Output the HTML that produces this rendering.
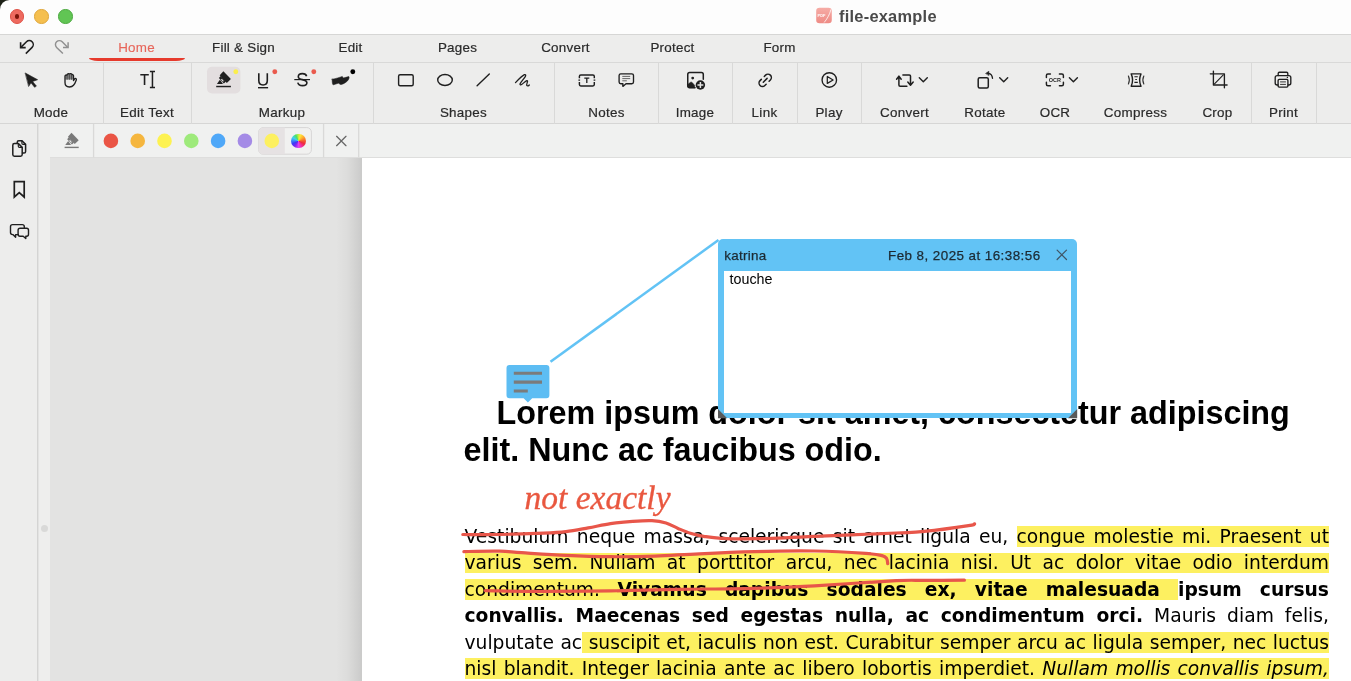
<!DOCTYPE html>
<html lang="en">
<head>
<meta charset="utf-8">
<title>file-example</title>
<style>
*{box-sizing:border-box;margin:0;padding:0}
html,body{width:1351px;height:681px;overflow:hidden;background:#fff}
body{position:relative;font-family:"Liberation Sans",sans-serif;color:#2a2a2a;font-size:13px}
.abs{position:absolute}
#titlebar{left:0;top:0;width:1351px;height:34px;background:#fdfdfd}
#corner{left:0;top:0;width:10px;height:10px;background:#1d2117}
#corner i{position:absolute;left:0.3px;top:0;width:24px;height:24px;border-radius:9.5px;background:#fdfdfd}
.tl{width:14.5px;height:14.5px;border-radius:50%;top:9.3px}
#title{left:839px;top:6.5px;font-weight:bold;font-size:16.4px;color:#4a4a4a;letter-spacing:0.25px;white-space:nowrap}
#tabrow{left:0;top:34px;width:1351px;height:29px;background:#ededec;border-top:1px solid #d6d6d5;border-bottom:1px solid #d9d9d8}
.tab{top:33.9px;-webkit-text-stroke:0.2px currentColor;height:28px;line-height:28px;text-align:center;width:107px;font-size:13.4px;letter-spacing:0.25px;color:#2a2a2a}
#toolbar{left:0;top:63px;width:1351px;height:61px;background:#ededec;border-bottom:1px solid #d6d6d5}
.sep{top:63px;width:1.4px;height:60.5px;background:#d9d9d8}
.lbl{top:104.7px;-webkit-text-stroke:0.2px currentColor;height:16px;line-height:16px;font-size:13.4px;letter-spacing:0.3px;text-align:center;white-space:nowrap;color:#2a2a2a;transform:translateX(-50%)}
.ico{overflow:visible}
#main{left:0;top:124px;width:1351px;height:557px;background:#e3e3e2}
#side{left:0;top:124px;width:38px;height:557px;background:#ededec;border-right:1px solid #d4d4d3}
#strip{left:39px;top:124px;width:11px;height:557px;background:#eeeeed}
#annbar{left:50px;top:124px;width:1301px;height:34px;background:#f0f1f0;border-bottom:1px solid #dededd}
#page{left:362px;top:158px;width:989px;height:523px;background:#fff}
#pshadow{left:336px;top:158px;width:26px;height:523px;background:linear-gradient(to right,rgba(0,0,0,0),rgba(0,0,0,0.03) 45%,rgba(0,0,0,0.11))}
.h1{left:464px;font-family:"Liberation Sans",sans-serif;font-weight:bold;font-size:32.3px;line-height:36px;color:#000;white-space:nowrap;height:36px}
.bl{left:464.5px;width:864.5px;height:26px;line-height:26px;font-family:"DejaVu Sans","Liberation Sans",sans-serif;font-size:18.7px;color:#000;text-align:justify;text-align-last:justify;white-space:nowrap;overflow:visible}
.bl span.hl{background:linear-gradient(#fdf060,#fdf060) no-repeat;background-size:100% 21px;background-position:0 0.5px}
.bl b{font-weight:bold}
.bl i{font-style:italic}
</style>
</head>
<body><div style="position:absolute;left:0;top:0;width:1351px;height:681px;will-change:transform">
<!-- title bar -->
<div id="titlebar" class="abs"></div>
<div id="corner" class="abs"><i></i></div>
<div class="abs tl" style="left:9.9px;background:#ee6a5f;border:0.6px solid #df5348"></div>
<div class="abs" style="left:14.8px;top:14.2px;width:4.7px;height:4.7px;border-radius:50%;background:#7c1409"></div>
<div class="abs tl" style="left:34.1px;background:#f5bf4f;border:0.6px solid #dfa63a"></div>
<div class="abs tl" style="left:58.3px;background:#61c554;border:0.6px solid #4ba93f"></div>
<svg class="abs" style="left:816px;top:7px" width="17" height="17" viewBox="816 7 17 17"><defs><linearGradient id="pg" x1="0" y1="0" x2="0" y2="1"><stop offset="0" stop-color="#f6aca6"/><stop offset="1" stop-color="#ee8b85"/></linearGradient></defs><rect x="816.2" y="7.8" width="15.6" height="15.4" rx="3.3" fill="url(#pg)"/><text x="817.6" y="16.9" font-size="4.3" font-weight="bold" fill="#fff" font-family="Liberation Sans, sans-serif" textLength="7.8" lengthAdjust="spacingAndGlyphs">PDF</text><path d="M824.4 22.2C826.6 19.6 829.8 14.6 830.9 9.8" stroke="#fff" stroke-opacity="0.85" stroke-width="0.9" fill="none" stroke-linecap="round"/></svg>
<div id="title" class="abs">file-example</div>

<!-- tab row -->
<div id="tabrow" class="abs"></div>
<div class="abs tab" style="left:83px;color:#e7655a;-webkit-text-stroke:0.1px #e7655a">Home</div>
<div class="abs" style="left:88.5px;top:57.5px;width:96px;height:3px;background:#e63a2c;border-radius:0 0 9px 9px / 0 0 3px 3px"></div>
<div class="abs tab" style="left:190px">Fill &amp; Sign</div>
<div class="abs tab" style="left:297px">Edit</div>
<div class="abs tab" style="left:404px">Pages</div>
<div class="abs tab" style="left:512px">Convert</div>
<div class="abs tab" style="left:619px">Protect</div>
<div class="abs tab" style="left:726px">Form</div>

<!-- toolbar -->
<div id="toolbar" class="abs"></div>
<div class="abs sep" style="left:103px"></div>
<div class="abs sep" style="left:191px"></div>
<div class="abs sep" style="left:373px"></div>
<div class="abs sep" style="left:554px"></div>
<div class="abs sep" style="left:658px"></div>
<div class="abs sep" style="left:732px"></div>
<div class="abs sep" style="left:797px"></div>
<div class="abs sep" style="left:861px"></div>
<div class="abs sep" style="left:1251px"></div>
<div class="abs sep" style="left:1316px"></div>
<div class="abs lbl" style="left:51px">Mode</div>
<div class="abs lbl" style="left:147px">Edit Text</div>
<div class="abs lbl" style="left:282px">Markup</div>
<div class="abs lbl" style="left:463.5px">Shapes</div>
<div class="abs lbl" style="left:606.5px">Notes</div>
<div class="abs lbl" style="left:695px">Image</div>
<div class="abs lbl" style="left:764.5px">Link</div>
<div class="abs lbl" style="left:829px">Play</div>
<div class="abs lbl" style="left:904.5px">Convert</div>
<div class="abs lbl" style="left:985px">Rotate</div>
<div class="abs lbl" style="left:1055px">OCR</div>
<div class="abs lbl" style="left:1135.5px">Compress</div>
<div class="abs lbl" style="left:1217.5px">Crop</div>
<div class="abs lbl" style="left:1283.5px">Print</div>
<!--ICONS-START-->
<!-- undo / redo -->
<svg class="abs ico" style="left:0;top:0" width="1351" height="130" viewBox="0 0 1351 130" fill="none" stroke="#1f1f1f" stroke-width="1.5" stroke-linecap="round" stroke-linejoin="round">
<!-- undo -->
<path d="M20.9 47.4L26.5 41.8A3.9 3.9 0 0 1 32.1 47.4L25.8 53.6" stroke-width="1.55" stroke-linecap="butt"/>
<path d="M20.6 42.3V47.6H25.7" stroke-width="1.6" stroke-linecap="butt" stroke-linejoin="miter"/>
<!-- redo -->
<g stroke="#909090"><path d="M67.8 47.4L62.2 41.8A3.9 3.9 0 0 0 56.6 47.4L62.9 53.6" stroke-width="1.45" stroke-linecap="butt"/>
<path d="M68.1 42.3V47.6H63" stroke-width="1.5" stroke-linecap="butt" stroke-linejoin="miter"/></g>
<!-- pointer -->
<path d="M25.4 73.1L37.6 79.7L32.6 81.5L36.4 86.1L34.6 87.3L31 82.8L28.8 86.2Z" fill="#1f1f1f" stroke-width="0.6"/>
<!-- hand -->
<path d="M65.4 79.4V76C65.4 75 66.6 74.6 67.2 75.2C67.4 74 68.8 73.4 69.4 74.2C70 73.3 71.2 73.5 71.5 74.5C72.2 74.2 73.2 74.6 73.2 75.6V79.4Z" fill="#8c8c8c" stroke="none"/>
<g stroke-width="1.35"><path d="M65 79V76.2C65 75.2 66 74.8 66.9 75.3C67.1 74 68.6 73.4 69.4 74.1C70.2 73.2 71.6 73.6 71.8 74.6C72.6 74.3 73.5 74.8 73.5 75.8V80.6L74.6 78.9C75.3 77.9 76.8 78.6 76.3 79.9C75.4 82.4 74.8 83.8 73.5 85.3C72.5 86.5 71.1 87 69.4 87C66.6 87 65 85.2 65 82.6Z"/>
<path d="M67.1 75.6V79.3M69.3 74.6V79.3M71.4 75V79.3" stroke-width="1.1" stroke="#4a4a4a"/></g>
<!-- edit text -->
<path d="M140.3 74.8H148.8M144.55 74.8V84.9" stroke-width="1.6" stroke-linecap="butt"/>
<path d="M149.9 71.6H155M149.9 87.4H155M152.45 71.6V87.4" stroke-width="1.5" stroke-linecap="butt"/>
<!-- highlight btn -->
<rect x="207" y="66.8" width="33.4" height="26.6" rx="5" fill="#e3dedf" stroke="none"/>
<g fill="#1f1f1f" stroke="none"><path d="M223.4 71.2L230.9 79L226.8 82.9L219.7 75.3Z"/><path d="M220.6 76L218.9 78L223.8 83.4L226 81.6Z"/><path d="M219.9 79.8L223 84.1H216.9Z"/><path d="M216.2 85.8H230.9V87.25H216.2Z"/></g>
<path d="M221.4 79.1L223.4 81.4" stroke="#e9e5e6" stroke-width="1.15" stroke-linecap="butt"/>
<circle cx="235.8" cy="71.7" r="2.45" fill="#fbee4c" stroke="none"/>
<!-- underline -->
<path d="M258.8 73.2V80.6C258.8 83.4 260.6 85 263.05 85C265.5 85 267.3 83.4 267.3 80.6V73.2" stroke-width="1.6" stroke-linecap="butt"/>
<path d="M258 87.7H268.1" stroke-width="1.4" stroke-linecap="butt"/>
<circle cx="274.8" cy="71.7" r="2.45" fill="#ea5a4d" stroke="none"/>
<!-- strike -->
<path d="M306.6 76.3C306.2 74.6 304.6 73.6 302.4 73.6C300 73.6 298.3 74.8 298.3 76.7C298.3 78.5 299.8 79.1 302.4 79.6C305.2 80.2 306.9 80.9 306.9 82.8C306.9 84.6 305.1 85.6 302.6 85.6C300 85.6 298.2 84.5 297.8 82.6" stroke-width="1.6" stroke-linecap="butt"/>
<path d="M294.3 79.6H310" stroke-width="1.2" stroke-linecap="butt"/>
<circle cx="313.8" cy="71.7" r="2.45" fill="#ea5a4d" stroke="none"/>
<!-- freehand -->
<path d="M332.1 79.2C336 78.6 339.5 77.4 342.3 76.4L343.3 78L348.6 76.6C349.4 76.4 349.2 78 348.7 79.2C347.5 81.6 344.3 83.6 341.6 84.4C340 84.8 339.4 83.6 338.6 83.2C337.2 83.6 334.6 84.4 333.2 84.8C332.4 84.9 332.2 82 332.1 79.2Z" fill="#1f1f1f" stroke-width="0.5"/>
<circle cx="352.8" cy="71.7" r="2.45" fill="#000" stroke="none"/>
<!-- shapes -->
<rect x="398.6" y="74.8" width="14.6" height="11" rx="1.5" stroke-width="1.4"/>
<ellipse cx="445" cy="80" rx="7.3" ry="5.5" stroke-width="1.4"/>
<path d="M477.1 85.7L489.3 74.1" stroke-width="1.4"/>
<path d="M515.5 82.6C518.6 79.4 522.1 75.8 524.4 74.7C525.6 74.2 526 75.2 525.4 76.4C524.2 78.6 520.4 82.6 520 84C519.8 85 520.8 85.2 521.6 84.6C523.4 83.3 525.4 81 526.8 80.6C527.8 80.4 527.6 81.6 527.2 82.6C526.8 83.8 526.4 85 526.9 85.6C527.5 86.2 528.6 85.8 529.3 85" stroke-width="1.3"/>
<!-- text box -->
<path d="M579.4 78.2V76.3C579.4 75.5 580 74.9 580.8 74.9H592.9C593.7 74.9 594.3 75.5 594.3 76.3V78.2M594.3 82V84.6C594.3 85.4 593.7 86 592.9 86H580.8C580 86 579.4 85.4 579.4 84.6V82M578.4 80.1H580.1M593.6 80.1H595.3" stroke-width="1.45" stroke-linecap="butt"/>
<path d="M584.3 78.1H589.3M586.8 78.1V82.9" stroke-width="1.3" stroke-linecap="butt"/>
<!-- note -->
<path d="M620.8 73.8H631.8C632.8 73.8 633.5 74.5 633.5 75.5V82C633.5 83 632.8 83.7 631.8 83.7H626L622.9 86.4V83.7H620.8C619.8 83.7 619.1 83 619.1 82V75.5C619.1 74.5 619.8 73.8 620.8 73.8Z" stroke-width="1.35"/>
<path d="M622.3 76.4H630.2M622.3 78.6H630.2M622.3 80.8H626.8" stroke-width="0.8" stroke="#444" stroke-linecap="butt"/>
<!-- image -->
<path d="M703.3 79.2V74.5C703.3 73.4 702.5 72.55 701.4 72.55H689.7C688.6 72.55 687.75 73.4 687.75 74.5V85.7C687.75 86.8 688.6 87.65 689.7 87.65H695" stroke-width="1.5"/>
<path d="M687.75 84.6L690.2 82.5C690.8 82 691.6 82 692.2 82.6L694.7 85.4C694.5 86.2 694.6 87 695 87.65H689.7C688.6 87.65 687.75 86.8 687.75 85.7Z" fill="#1f1f1f" stroke-width="0.6"/>
<circle cx="692.7" cy="78.1" r="1.4" fill="#1f1f1f" stroke="none"/>
<circle cx="700.4" cy="84.95" r="4.7" fill="#1f1f1f" stroke="none"/>
<path d="M700.4 82V87.9M697.45 84.95H703.35" stroke="#e4e4e3" stroke-width="1.5" stroke-linecap="butt"/>
<!-- link -->
<g transform="translate(765.2 80.3) rotate(-45)" stroke-width="1.5"><path d="M2.1 -3.4H3.9A3.4 3.4 0 0 1 3.9 3.4H2.1"/><path d="M-2.1 3.4H-3.9A3.4 3.4 0 0 1 -3.9 -3.4H-2.1"/><path d="M-2.7 0H2.7"/></g>
<!-- play -->
<circle cx="829.3" cy="79.95" r="7.25" stroke-width="1.35"/>
<path d="M827.3 76.5V83.4L833.1 79.95Z" stroke-width="1.25"/>
<!-- convert -->
<g stroke-width="1.5"><path d="M896.6 79.2L898.9 76.1L901.2 79.2M898.9 76.4V85C898.9 85.7 899.4 86.2 900.1 86.2H906.9"/><path d="M913.2 82L910.5 85.2L907.8 82M910.5 84.9V76.1C910.5 75.4 910 74.9 909.3 74.9H902.9"/></g>
<path d="M919.3 77.8L923.3 81.8L927.3 77.8" stroke-width="1.4"/>
<!-- rotate -->
<rect x="978.2" y="77.85" width="10.1" height="10.1" rx="1.5" stroke-width="1.5"/>
<path d="M988.4 73.3C990.8 73.7 992.3 75.6 992.5 78.3" stroke-width="1.35"/>
<path d="M985.8 73.3L988.9 71.2V75.3Z" fill="#1f1f1f" stroke-width="0.5"/>
<path d="M999.7 77.8L1003.7 81.8L1007.7 77.8" stroke-width="1.4"/>
<!-- ocr -->
<path d="M1046.4 77.6V75.5C1046.4 74.6 1047 74 1047.9 74H1050.4M1059.4 74H1061.9C1062.8 74 1063.4 74.6 1063.4 75.5V77.6M1063.4 82.2V84.3C1063.4 85.2 1062.8 85.8 1061.9 85.8H1059.4M1050.4 85.8H1047.9C1047 85.8 1046.4 85.2 1046.4 84.3V82.2" stroke-width="1.45"/>
<path d="M1069.4 77.8L1073.4 81.8L1077.4 77.8" stroke-width="1.4"/>
<!-- compress -->
<path d="M1131.2 73.9H1141C1139.4 77.5 1139.4 82.7 1141 86.3H1131.2C1132.8 82.7 1132.8 77.5 1131.2 73.9Z" stroke-width="1.4"/>
<path d="M1134.4 76.7H1137.8M1135.3 79.5H1136.9M1134.4 82.4H1137.8" stroke-width="1.1" stroke-linecap="butt"/>
<path d="M1128.4 76C1129.6 78.5 1129.6 81.5 1128.4 84M1143.8 76C1142.6 78.5 1142.6 81.5 1143.8 84" stroke-width="1.15" stroke="#333"/>
<!-- crop -->
<path d="M1213.4 71.1V85H1227.1M1210.3 73.8H1224.4V87.8" stroke-width="1.35"/>
<path d="M1214.5 83.9L1223.3 74.8" stroke-width="1.1"/>
<!-- print -->
<g stroke-width="1.35"><path d="M1278.2 75.5V73.4C1278.2 72.7 1278.7 72.2 1279.4 72.2H1286.6C1287.3 72.2 1287.8 72.7 1287.8 73.4V75.5"/><path d="M1278 85H1277.2C1276 85 1275.2 84.2 1275.2 83V77.6C1275.2 76.4 1276 75.6 1277.2 75.6H1288.8C1290 75.6 1290.8 76.4 1290.8 77.6V83C1290.8 84.2 1290 85 1288.8 85H1288"/><rect x="1278.1" y="79.4" width="9.8" height="7.7" rx="1.1"/><path d="M1280.1 81.9H1285.9M1280.1 84.4H1285.9" stroke-width="0.9" stroke-linecap="butt"/></g>
<circle cx="1287.4" cy="77.5" r="0.7" fill="#1f1f1f" stroke="none"/>
</svg>
<div class="abs" style="left:1047.9px;top:76.9px;width:14px;height:7px;line-height:7px;font-size:5.5px;font-weight:bold;text-align:center;color:#1f1f1f;letter-spacing:0px">OCR</div>
<!--ICONS-END-->

<!-- main -->
<div id="main" class="abs"></div>
<div id="side" class="abs"></div>
<div id="strip" class="abs"></div>
<div class="abs" style="left:41px;top:524.5px;width:7px;height:7px;border-radius:50%;background:#d9d9d8"></div>
<div id="pshadow" class="abs"></div>
<div id="page" class="abs"></div>
<div id="annbar" class="abs"></div>
<!--ANNBAR-START-->
<svg class="abs ico" style="left:0;top:124px" width="400" height="140" viewBox="0 124 400 140" fill="none" stroke="#1f1f1f" stroke-width="1.5" stroke-linecap="round" stroke-linejoin="round">
<!-- ann bar separators -->
<path d="M93.6 124V157.5M323.6 124V157.5M358.7 124V157.5" stroke="#d9d9d8" stroke-width="1.3" stroke-linecap="butt"/>
<!-- grey highlighter -->
<g transform="translate(64.6 132.7) scale(0.96) translate(-216.2 -71.2)"><g fill="#797979" stroke="none"><path d="M223.4 71.2L230.9 79L226.8 82.9L219.7 75.3Z"/><path d="M220.6 76L218.9 78L223.8 83.4L226 81.6Z"/><path d="M219.9 79.8L223 84.1H216.9Z"/><path d="M216.2 85.8H230.9V87.25H216.2Z"/></g>
<path d="M221.4 79.1L223.4 81.4" stroke="#f0f1f0" stroke-width="1.15" stroke-linecap="butt"/></g>
<!-- dots -->
<g stroke="none">
<circle cx="110.9" cy="140.9" r="7.3" fill="#ea5545"/>
<circle cx="137.7" cy="140.9" r="7.3" fill="#f5b63e"/>
<circle cx="164.5" cy="140.9" r="7.3" fill="#fdf251"/>
<circle cx="191.3" cy="140.9" r="7.3" fill="#9eea7b"/>
<circle cx="218.1" cy="140.9" r="7.3" fill="#4fa8f8"/>
<circle cx="244.9" cy="140.9" r="7.3" fill="#a48be6"/>
</g>
<!-- selected group -->
<rect x="258.6" y="127.6" width="52.8" height="26.6" rx="4.5" fill="#f1f1f0" stroke="#d7d6d6" stroke-width="1"/>
<path d="M263.1 127.6H284.8V154.2H263.1A4.5 4.5 0 0 1 258.6 149.7V132.1A4.5 4.5 0 0 1 263.1 127.6Z" fill="#e6e2e3" stroke="none"/>
<circle cx="271.8" cy="140.9" r="7.3" fill="#fdf060" stroke="none"/>
<!-- close X -->
<path d="M336.6 136.3L346 145.7M346 136.3L336.6 145.7" stroke="#666" stroke-width="1.25"/>
<!-- side icons: pages -->
<g stroke-width="1.5">
<path d="M17.2 143.2V142.4C17.2 141.5 17.9 140.8 18.8 140.8H22L25.6 144.4V151.4C25.6 152.3 24.9 153 24 153H22.6"/>
<path d="M21.9 140.9V143.2C21.9 143.9 22.4 144.4 23.1 144.4H25.4" stroke-width="1.2"/>
<path d="M14.4 143.6H18.4L22.2 147.4V154.6C22.2 155.5 21.5 156.2 20.6 156.2H14.4C13.5 156.2 12.8 155.5 12.8 154.6V145.2C12.8 144.3 13.5 143.6 14.4 143.6Z"/>
<path d="M18.3 143.7V146.2C18.3 146.9 18.8 147.4 19.5 147.4H22" stroke-width="1.2"/>
</g>
<!-- bookmark -->
<path d="M14.3 181.7H24.2V197L19.25 192.6L14.3 197Z" stroke-width="1.7" stroke-linejoin="miter"/>
<!-- comments -->
<g stroke-width="1.4">
<path d="M18.3 234.6H15.6V237.2L12.9 234.6H12.6C11.4 234.6 10.5 233.7 10.5 232.5V226.7C10.5 225.5 11.4 224.6 12.6 224.6H22.2C23.4 224.6 24.3 225.5 24.3 226.7V227.6"/>
<path d="M20 228.3H26.6C27.7 228.3 28.5 229.1 28.5 230.2V234.3C28.5 235.4 27.7 236.2 26.6 236.2H25.8V238.5L23.2 236.2H20C18.9 236.2 18.1 235.4 18.1 234.3V230.2C18.1 229.1 18.9 228.3 20 228.3Z"/>
</g>
</svg>
<div class="abs" style="left:291.1px;top:133.6px;width:14.7px;height:14.7px;border-radius:50%;background:conic-gradient(from 0deg,#c4f03c 0deg,#ffe63a 18deg,#ffb030 50deg,#f5642d 85deg,#ee2c3c 115deg,#f030b0 155deg,#e040f0 180deg,#7a28f0 215deg,#3a3af5 245deg,#3c8cf8 275deg,#40d0f0 300deg,#50e060 335deg,#c4f03c 360deg)"></div>
<!--ANNBAR-END-->
<!--SIDEICONS-->
<!--DOC-START-->
<div class="abs h1" style="top:395.4px;left:496.6px">Lorem ipsum dolor sit amet, consectetur adipiscing</div>
<div class="abs h1" style="top:432.3px;left:463.6px">elit. Nunc ac faucibus odio.</div>
<div class="abs bl" id="l1" style="top:523.7px">Vestibulum neque massa, scelerisque sit amet ligula eu, <span class="hl">congue molestie mi. Praesent ut</span></div>
<div class="abs bl" id="l2" style="top:550.1px"><span class="hl">varius sem. Nullam at porttitor arcu, nec lacinia nisi. Ut ac dolor vitae odio interdum</span></div>
<div class="abs bl" id="l3" style="top:576.6px"><span class="hl">condimentum. <b>Vivamus dapibus sodales ex, vitae malesuada </b></span><b>ipsum cursus</b></div>
<div class="abs bl" id="l4" style="top:603.0px"><b>convallis. Maecenas sed egestas nulla, ac condimentum orci.</b> Mauris diam felis,</div>
<div class="abs bl" id="l5" style="top:629.5px">vulputate ac<span class="hl"> suscipit et, iaculis non est. Curabitur semper arcu ac ligula semper, nec luctus</span></div>
<div class="abs bl" id="l6" style="top:655.9px"><span class="hl">nisl blandit. Integer lacinia ante ac libero lobortis imperdiet. <i>Nullam mollis convallis ipsum,</i></span></div>
<!-- handwriting -->
<div class="abs" id="hw" style="left:524.5px;top:480.2px;font-family:'Liberation Serif',serif;font-style:italic;font-size:33.5px;line-height:36px;color:#e9573f;-webkit-text-stroke:0.35px #e9573f;white-space:nowrap">not exactly</div>
<!-- red pen strokes, connector, note icon -->
<svg class="abs ico" style="left:362px;top:157px" width="989" height="524" viewBox="362 157 989 524" fill="none">
<g stroke="#e8564a" stroke-width="3.2" stroke-linecap="round" stroke-linejoin="round">
<path d="M462.8 534.5C468.9 534.5 485.9 534.7 499.4 534.5C512.9 534.3 532.7 533.7 543.8 533.2C554.9 532.7 558.6 532.5 566.0 531.6C573.4 530.7 580.8 529.2 588.2 527.9C595.6 526.6 603.1 524.7 610.5 523.6C617.9 522.5 625.8 521.8 632.7 521.3C639.6 520.8 646.5 520.3 652.0 520.6C657.5 520.9 661.7 521.7 666.0 523.0C670.3 524.3 673.9 526.7 678.0 528.4C682.1 530.1 686.1 531.9 690.4 533.2C694.7 534.5 698.5 535.4 703.7 536.3C708.9 537.1 713.0 537.9 721.5 538.3C730.0 538.7 739.3 539.0 754.8 538.7C770.3 538.4 790.9 537.4 814.5 536.4C838.1 535.4 877.9 533.8 896.2 533.0C914.5 532.2 912.1 532.6 924.1 531.4C936.1 530.2 960.1 526.9 968.5 525.6C976.9 524.4 973.6 524.2 974.6 523.9"/>
<path d="M463.9 551.6C469.8 551.5 489.8 551.0 499.4 551.2C509.0 551.4 510.5 552.0 521.6 552.7C532.7 553.4 551.2 554.7 566.0 555.4C580.8 556.1 595.7 556.6 610.5 556.7C625.3 556.8 640.1 556.6 654.9 556.1C669.7 555.6 682.6 554.5 699.3 553.8C715.9 553.0 735.6 552.1 754.8 551.6C774.0 551.1 796.0 550.7 814.5 551.0C833.0 551.3 854.4 552.6 865.6 553.4C876.9 554.2 878.5 554.8 882.0 555.6C885.5 556.4 885.6 557.1 886.6 558.4C887.6 559.7 887.5 562.7 887.7 563.6"/>
<path d="M485.3 590.6C495.1 590.7 522.9 591.4 543.8 591.4C564.7 591.4 588.3 591.2 610.5 590.9C632.7 590.6 653.1 589.8 677.1 589.4C701.1 589.0 731.9 588.9 754.8 588.3C777.7 587.7 790.9 587.1 814.5 585.8C838.1 584.5 877.9 581.6 896.2 580.7C914.5 579.8 912.7 580.5 924.1 580.4C935.5 580.3 957.7 580.2 964.4 580.2"/>
</g>
<!-- connector -->
<path d="M550.5 361.7L718.5 240" stroke="#62c3f5" stroke-width="2.6" stroke-linecap="butt"/>
<!-- note icon -->
<path d="M509.5 365H546.4A3 3 0 0 1 549.4 368V395.3A3 3 0 0 1 546.4 398.3H532.2L527.9 402.6L523.6 398.3H509.5A3 3 0 0 1 506.5 395.3V368A3 3 0 0 1 509.5 365Z" fill="#5dbdf3"/>
<path d="M513.8 373.2H542M513.8 382.1H542M513.8 391H527.8" stroke="#7b7b7b" stroke-width="3.1"/>
</svg>
<!-- popup -->
<div class="abs" style="left:718px;top:239px;width:359.2px;height:179.3px;background:#62c3f5;border-radius:5px 5px 0 0"></div>
<svg class="abs ico" style="left:718px;top:409px" width="360" height="10" viewBox="718 409 360 10"><path d="M718 409.1V418.3H727.2Z" fill="#5a5a5a"/><path d="M1077.2 409.1V418.3H1068Z" fill="#5a5a5a"/></svg>
<div class="abs" style="left:723.8px;top:271px;width:347.4px;height:141.6px;background:#fff"></div>
<div class="abs pt" id="pk" style="left:724.3px;top:248px;font-size:13.4px;line-height:16px;letter-spacing:0.3px;-webkit-text-stroke:0.25px #1c2a33;color:#1c2a33;white-space:nowrap">katrina</div>
<div class="abs pt" id="pd" style="left:888px;top:248px;font-size:13.4px;line-height:16px;letter-spacing:0.45px;-webkit-text-stroke:0.25px #1c2a33;color:#1c2a33;white-space:nowrap">Feb 8, 2025 at 16:38:56</div>
<svg class="abs ico" style="left:1056px;top:249.4px" width="12" height="12" viewBox="0 0 12 12" fill="none" stroke="#3f5566" stroke-width="1.2" stroke-linecap="round"><path d="M1.1 1.1L10.5 10.5M10.5 1.1L1.1 10.5"/></svg>
<div class="abs" id="pt" style="left:729.6px;top:271px;font-size:14.3px;line-height:17px;color:#000;white-space:nowrap">touche</div>
<!--DOC-END-->
</div></body>
</html>
